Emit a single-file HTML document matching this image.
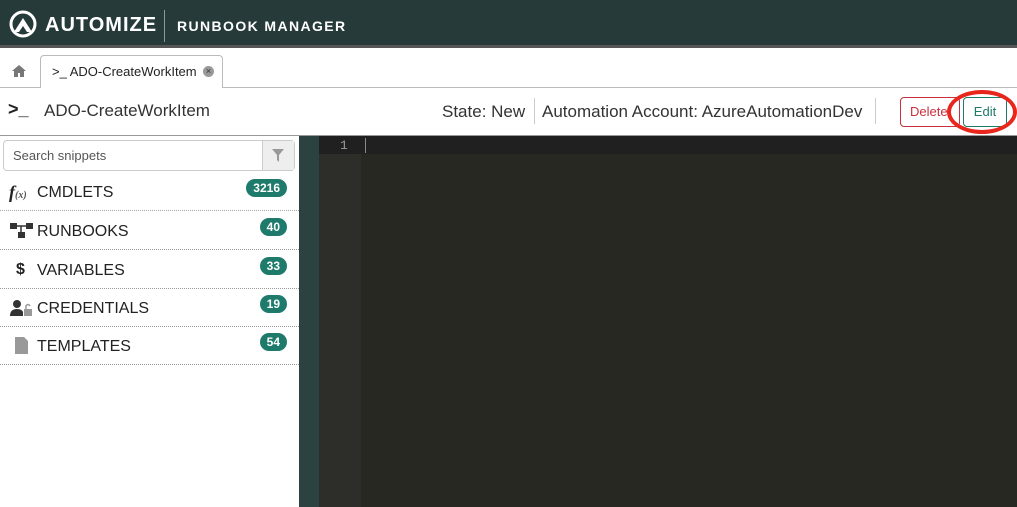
<!DOCTYPE html>
<html><head><style>
*{margin:0;padding:0;box-sizing:border-box}
body{width:1017px;height:507px;overflow:hidden;font-family:"Liberation Sans",sans-serif;background:#fff;position:relative}
.hdr{position:absolute;left:0;top:0;width:1017px;height:46px;background:#263a3a}
.hdr2{position:absolute;left:0;top:45px;width:1017px;height:3px;background:#555}
.abs{position:absolute}
.row{position:absolute;left:0;width:299px;height:38px;border-bottom:1px dotted #999;font-size:16px;color:#222}
.row span.t{position:absolute;left:37px;top:11px}
.badge{position:absolute;right:12px;top:6px;background:#1e7a6a;color:#fff;font-weight:bold;font-size:12px;border-radius:9px;height:18px;line-height:18px;padding:0 7px}
</style></head><body>
<div class="hdr"></div><div class="hdr2"></div>
<svg class="abs" style="left:9px;top:10px" width="28" height="28" viewBox="0 0 28 28"><circle cx="14" cy="14" r="12" fill="none" stroke="#fff" stroke-width="3"/><path d="M5 22 L14 8 L23 22 L18 22 L14 16 L10 22Z" fill="#fff"/></svg>
<div class="abs" style="left:45px;top:14px;color:#fff;font-weight:bold;font-size:20px;letter-spacing:1px">AUTOMIZE</div>
<div class="abs" style="left:164px;top:10px;width:1px;height:32px;background:#8a9a9a"></div>
<div class="abs" style="left:177px;top:18px;color:#fff;font-weight:bold;font-size:14px;letter-spacing:1.4px">RUNBOOK MANAGER</div>
<div class="abs" style="left:0;top:87px;width:1017px;height:1px;background:#bbb"></div>
<svg class="abs" style="left:12px;top:65px" width="14" height="12" viewBox="0 0 14 12"><path d="M7 0L0 6H2V12H6V8H8V12H12V6H14Z" fill="#777"/></svg>
<div class="abs" style="left:40px;top:55px;width:183px;height:33px;background:#fff;border:1px solid #bbb;border-bottom:none;border-radius:4px 4px 0 0"></div>
<div class="abs" style="left:52px;top:64px;font-size:13px;color:#222">&gt;_ ADO-CreateWorkItem</div>
<div class="abs" style="left:203px;top:66px;width:11px;height:11px;border-radius:50%;background:#999;color:#333;font-size:9px;line-height:11px;text-align:center">×</div>
<div class="abs" style="left:8px;top:99px;font-size:18px;color:#222;font-weight:bold">&gt;_</div>
<div class="abs" style="left:44px;top:101px;font-size:17px;color:#333">ADO-CreateWorkItem</div>
<div class="abs" style="left:442px;top:102px;font-size:17px;color:#333">State: New</div>
<div class="abs" style="left:534px;top:98px;width:1px;height:26px;background:#ccc"></div>
<div class="abs" style="left:542px;top:102px;font-size:17px;color:#333">Automation Account: AzureAutomationDev</div>
<div class="abs" style="left:875px;top:98px;width:1px;height:26px;background:#ccc"></div>
<div class="abs" style="left:900px;top:97px;width:60px;height:30px;border:1px solid #c9303e;border-radius:4px;color:#c9303e;font-size:13px;line-height:28px;padding-left:9px">Delete</div>
<div class="abs" style="left:963px;top:97px;width:44px;height:30px;border:1px solid #1e7a6a;border-radius:4px;color:#1e7a6a;font-size:13px;line-height:28px;text-align:center;background:#fff">Edit</div>
<div class="abs" style="left:947px;top:90px;width:70px;height:44px;border:4px solid #e8261c;border-radius:50%"></div>
<div class="abs" style="left:0;top:135px;width:1017px;height:1px;background:#999"></div>
<div class="abs" style="left:3px;top:140px;width:292px;height:31px;border:1px solid #ccc;border-radius:4px"></div>
<div class="abs" style="left:262px;top:141px;width:32px;height:29px;background:#eee;border-left:1px solid #ccc"></div>
<svg class="abs" style="left:272px;top:149px" width="12" height="13"><path d="M0 0H12L7 6V13L5 11V6Z" fill="#999"/></svg>
<div class="abs" style="left:13px;top:148px;font-size:13px;color:#555">Search snippets</div>
<div class="row" style="top:173px;border-bottom-color:#aaa"><span class="abs" style="left:9px;top:9px;font-size:18px;font-style:italic;font-weight:bold;font-family:'Liberation Serif',serif">f<small style="font-size:10px;color:#555">(x)</small></span><span class="t">CMDLETS</span><span class="badge">3216</span></div>
<div class="row" style="top:212px"><svg class="abs" style="left:10px;top:11px" width="23" height="16"><rect x="0" y="0" width="7" height="6" fill="#333"/><rect x="16" y="0" width="7" height="6" fill="#333"/><rect x="8" y="9" width="7" height="6" fill="#333"/><path d="M7 3H16M11 3V9" stroke="#333" stroke-width="1.5"/></svg><span class="t">RUNBOOKS</span><span class="badge">40</span></div>
<div class="row" style="top:251px"><span class="abs" style="left:16px;top:10px;font-weight:bold;font-size:16px">$</span><span class="t">VARIABLES</span><span class="badge">33</span></div>
<div class="row" style="top:289px"><svg class="abs" style="left:10px;top:10px" width="23" height="18"><circle cx="7" cy="5" r="4" fill="#333"/><path d="M0 17Q0 10 7 10Q12 10 13 13V17Z" fill="#333"/><rect x="14" y="10" width="8" height="7" fill="#999"/><path d="M16 10V7Q18 4 20 7" stroke="#999" fill="none" stroke-width="1.5"/></svg><span class="t">CREDENTIALS</span><span class="badge">19</span></div>
<div class="row" style="top:327px"><svg class="abs" style="left:15px;top:10px" width="13" height="17"><path d="M0 0H9L13 4V17H0Z" fill="#999"/></svg><span class="t">TEMPLATES</span><span class="badge">54</span></div>
<div class="abs" style="left:299px;top:136px;width:20px;height:371px;background:#2b4240"></div>
<div class="abs" style="left:319px;top:136px;width:42px;height:371px;background:#2d2d29"></div>
<div class="abs" style="left:361px;top:136px;width:656px;height:371px;background:#272822"></div>
<div class="abs" style="left:319px;top:136px;width:698px;height:18px;background:#202020"></div>
<div class="abs" style="left:340px;top:138px;font-family:'Liberation Mono',monospace;font-size:13px;color:#999">1</div>
<div class="abs" style="left:365px;top:138px;width:1px;height:15px;background:#888"></div>
</body></html>
